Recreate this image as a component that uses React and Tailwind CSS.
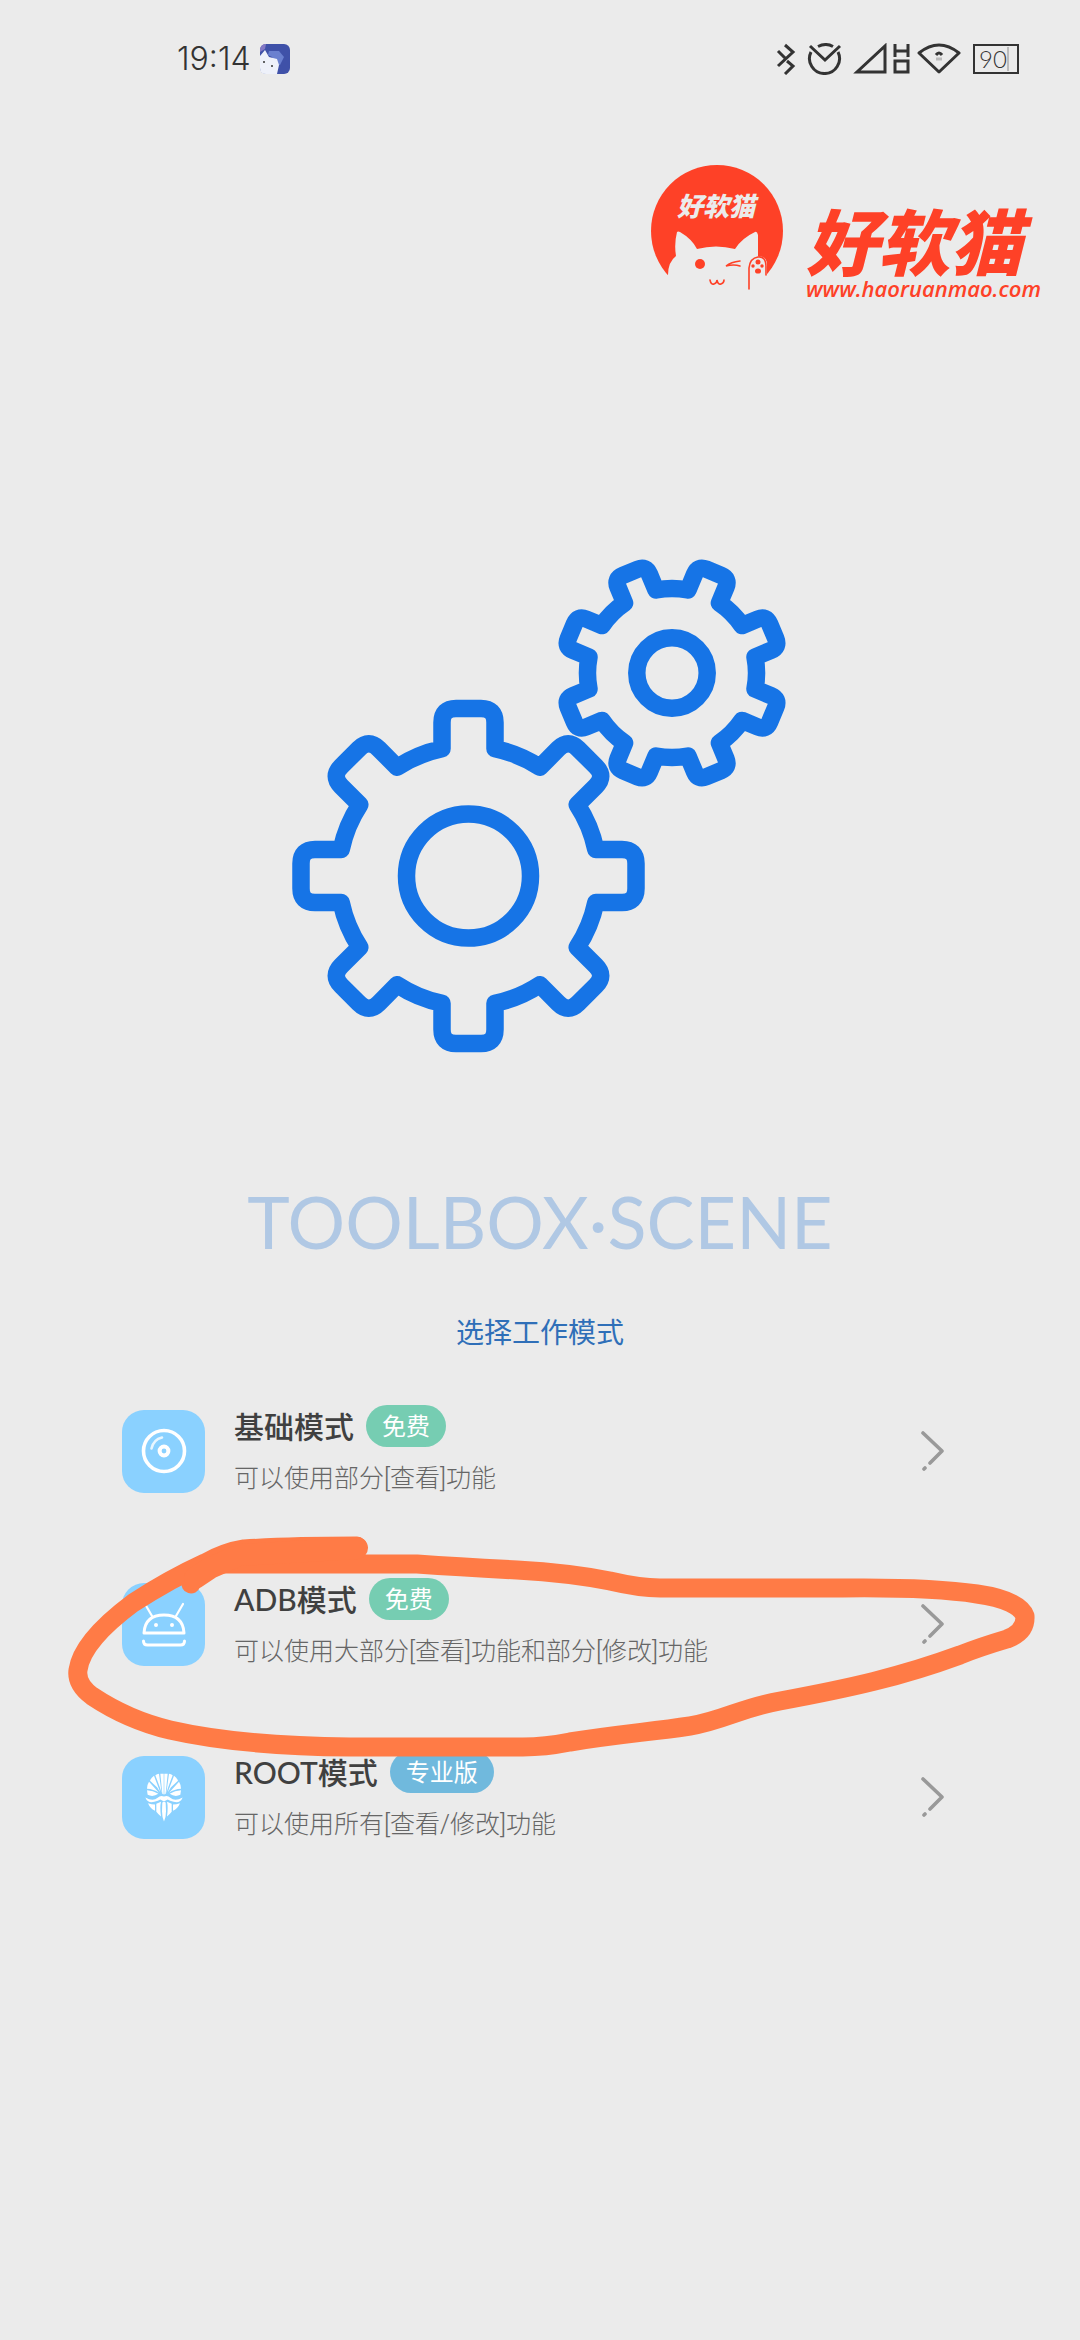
import React from "react";

const rad = (deg) => (deg * Math.PI) / 180;

/* Outline of an eight-toothed gear with rounded tooth corners. */
function gearPath(cx, cy, root, tip, half, corner, offset) {
  const parts = [];
  const baseAngle = Math.asin(half / root);
  const base = root * Math.cos(baseAngle);
  for (let i = 0; i < 8; i++) {
    const a = rad(i * 45 + offset);
    const at = (along, across) =>
      [
        cx + along * Math.cos(a) - across * Math.sin(a),
        cy + along * Math.sin(a) + across * Math.cos(a),
      ]
        .map((n) => n.toFixed(1))
        .join(" ");
    parts.push(
      i === 0 ? `M${at(base, -half)}` : `A${root} ${root} 0 0 1 ${at(base, -half)}`,
      `L${at(tip - corner, -half)}`,
      `Q${at(tip, -half)} ${at(tip, -half + corner)}`,
      `L${at(tip, half - corner)}`,
      `Q${at(tip, half)} ${at(tip - corner, half)}`,
      `L${at(base, half)}`
    );
    if (i === 7) {
      const s = rad(offset);
      const x = cx + base * Math.cos(s) + half * Math.sin(s);
      const y = cy + base * Math.sin(s) - half * Math.cos(s);
      parts.push(`A${root} ${root} 0 0 1 ${x.toFixed(1)} ${y.toFixed(1)}Z`);
    }
  }
  return parts.join("");
}

function Gears() {
  return (
    <svg
      viewBox="0 0 500 500"
      className="h-[500px] w-[500px]"
      fill="none"
      stroke="#1674e6"
      strokeWidth="17.5"
      strokeLinejoin="round"
      aria-hidden="true"
    >
      <path d={gearPath(178.5, 321, 130, 167.5, 26.5, 14, 0)} />
      <circle cx="178.5" cy="321" r="62" />
      <path d={gearPath(382, 118, 84.5, 109, 17, 9, 22.5)} />
      <circle cx="382" cy="118" r="35.2" />
    </svg>
  );
}

function AppBadge() {
  return (
    <svg viewBox="0 0 32 32" className="h-8 w-8" aria-hidden="true">
      <rect x="1" y="1" width="30" height="30" rx="6" fill="#3f51a8" />
      <path d="M10 8h10l5 6-4 8h-3l-5-8-4-2z" fill="#6a80cf" />
      <path d="M1 13l5-6 4 7 8 2 2 6-2 9H7q-6 0-6-6z" fill="#eef1fa" />
      <path d="M1 9V6q1-5 6-5l-1 5z" fill="#8378c4" />
      <circle cx="5" cy="19" r="1" fill="#333" />
      <circle cx="13" cy="23" r="1" fill="#333" />
    </svg>
  );
}

function StatusIcons() {
  return (
    <svg
      viewBox="0 0 186 32"
      className="h-8 w-[186px]"
      fill="none"
      stroke="#333"
      strokeWidth="3"
      aria-hidden="true"
    >
      <path d="M2 8l7 7M9 2l8 7L2 23M11 18l6 5-8 8" />
      <path d="M34 3l15 14L64 3" />
      <path d="M42 3.5q8-4 15 0M35 9a15 15 0 1 0 27 0" />
      <path d="M109 3v26H81z" />
      <path d="M119 1v13M132 1v13M119 8h13M119 18h13v11h-13z" />
      <path d="M143 10q20-16 40 0L163 29z" strokeLinejoin="round" />
      <path d="M160 12q3-4 6 0" />
      <path d="M160 16h6" stroke="#bbb" />
    </svg>
  );
}

function StatusBar() {
  return (
    <header className="flex h-[118px] items-center justify-between pr-[61px] pl-[177px] text-[#333]">
      <div className="flex items-center gap-2">
        <time className="font-[Inter,sans-serif] text-[32px] leading-8 font-light">19:14</time>
        <AppBadge />
      </div>
      <div className="flex items-center gap-[11px]">
        <StatusIcons />
        <div className="flex h-[30px] w-[46px] items-center border-2 border-[#333] pl-1 font-[Lato,sans-serif] text-[24px] leading-6 font-light">
          <span className="border-r-2 border-[#bbb]">90</span>
        </div>
      </div>
    </header>
  );
}

function CatLogo() {
  return (
    <svg viewBox="0 0 134 134" className="h-[134px] w-[134px]" aria-hidden="true">
      <circle cx="67" cy="67" r="66" fill="#fe4127" />
      <path
        d="M0 134V111H18Q18 98 26 92Q24 80 27 68Q28 67 30 68Q42 75 47 85Q66 80 85 85Q92 74 105 68Q107 67 108 71V92Q117 92 117 101V111H134V134Z"
        fill="#ebebeb"
      />
      <circle cx="50" cy="100" r="5" fill="#fe4127" />
      <g fill="none" stroke="#fe4127" strokeWidth="1.6" strokeLinecap="round">
        <path d="M90 97q-9 1-14 5q8-2 14 0" />
        <path d="M60 116q1 5 4 4t3-4q1 5 4 4t3-4" />
        <path d="M99 125V104q1-10 9-11t8 10v8" />
      </g>
      <g fill="#fe4127">
        <circle cx="108" cy="98" r="2.5" />
        <circle cx="103" cy="102" r="1.7" />
        <circle cx="112" cy="102" r="1.7" />
        <ellipse cx="108" cy="107" rx="3" ry="2.6" />
      </g>
      <text
        x="66"
        y="52"
        textAnchor="middle"
        fill="#ebebeb"
        className="font-['Noto_Sans_CJK_SC',sans-serif] text-[26px] font-black italic"
      >
        好软猫
      </text>
    </svg>
  );
}

function Brand() {
  return (
    <div className="flex items-start justify-end gap-[22px] pt-[46px] pr-[39px] text-[#fe4127]">
      <CatLogo />
      <div className="flex flex-col pt-[38px]">
        <span className="font-['Noto_Sans_CJK_SC',sans-serif] text-[72px] leading-[74px] font-black italic">
          好软猫
        </span>
        <a href="#site" className="font-['Open_Sans',sans-serif] text-[22px] leading-6 font-semibold italic">
          www.haoruanmao.com
        </a>
      </div>
    </div>
  );
}

function DiscIcon() {
  return (
    <svg viewBox="0 0 48 48" className="h-12 w-12" fill="none" stroke="#fff" aria-hidden="true">
      <circle cx="24" cy="24" r="20.5" strokeWidth="3.6" />
      <circle cx="24" cy="24" r="4.4" strokeWidth="4" />
      <path d="M11.500 21.500Q13.500 12.500 22 10.500" strokeWidth="2.6" strokeLinecap="round" opacity="0.8" />
    </svg>
  );
}

function AndroidIcon() {
  return (
    <svg
      viewBox="0 0 48 48"
      className="h-12 w-12"
      fill="none"
      stroke="#fff"
      strokeWidth="3"
      strokeLinecap="round"
      strokeLinejoin="round"
      aria-hidden="true"
    >
      <path d="M4 33Q5 15 24 15T44 33Z" />
      <path d="M12 16L5 4M36 16L43 4" strokeWidth="2.2" />
      <path d="M3.500 41q0 4 4 4h33q4 0 4-4" />
      <circle cx="16" cy="25" r="1" strokeWidth="2" />
      <circle cx="32" cy="25" r="1" strokeWidth="2" />
    </svg>
  );
}

function MaskIcon() {
  const half = (
    <>
      <path d="M102 38L92 38L98 98L102 100Z" />
      <path d="M88 38Q82 39 77 42L91 80L96 96Z" />
      <path d="M73 44Q64 50 61 59L82 78L92 94Z" />
      <path d="M58 62Q52 71 52 83Q72 84 88 95Z" />
      <path d="M52 87L54 101Q70 109 86 98Q70 88 52 87Z" />
      <path d="M103 106Q92 101 84 110Q70 122 47 109Q54 127 74 122Q86 119 92 115L103 121Z" />
      <path d="M55 126Q61 141 76 149V130Q66 130 55 126Z" />
      <path d="M80 128L94 122Q90 138 94 166Q86 160 80 152Z" />
      <path d="M98 124L103 122V181Q97 168 97 150Z" />
    </>
  );
  return (
    <svg viewBox="46 36 114 146" className="h-[49px] w-[38px]" fill="#fff" aria-hidden="true">
      <g>{half}</g>
      <g transform="translate(206 0) scale(-1 1)">{half}</g>
    </svg>
  );
}

function Chevron() {
  return (
    <svg
      viewBox="0 0 24 42"
      className="h-[42px] w-6"
      fill="none"
      stroke="#999"
      strokeWidth="3.6"
      strokeLinecap="round"
      strokeLinejoin="round"
      aria-hidden="true"
    >
      <path d="M3 3l19 18-12 12M4 39l1-1" />
    </svg>
  );
}

/* Hand-drawn loop around the highlighted mode. */
function Marker() {
  return (
    <svg
      viewBox="0 0 980 230"
      className="pointer-events-none absolute top-[-50px] left-[-62px] h-[230px] w-[980px] max-w-none"
      fill="none"
      stroke="#ff7b46"
      strokeWidth="19"
      strokeLinecap="round"
      strokeLinejoin="round"
      aria-hidden="true"
    >
      <path d="M297 18Q230 18 184 21Q165 24 145 35Q110 51 73 75Q22 113 18 142Q16 156 32 168Q68 192 110 202Q180 218 290 219H463Q485 219 510 214C560 206 590 204 630 198C665 192 680 180 720 173C790 160 840 149 900 127Q920 119 947 111Q966 104 965 88Q959 72 917 66Q870 59 783 60H600Q580 60 550 53Q510 45 457 42Q400 39 357 36H157Q136 40 131 56" />
      <path d="M297 20L180 27L150 40L135 50" strokeWidth="22" />
    </svg>
  );
}

const modes = [
  { icon: DiscIcon, title: "基础模式", tag: "免费", tone: "bg-[#76cdb2]", text: "可以使用部分[查看]功能" },
  {
    icon: AndroidIcon,
    title: "ADB模式",
    tag: "免费",
    tone: "bg-[#76cdb2]",
    text: "可以使用大部分[查看]功能和部分[修改]功能",
    marked: true,
  },
  { icon: MaskIcon, title: "ROOT模式", tag: "专业版", tone: "bg-[#70b9dd]", text: "可以使用所有[查看/修改]功能" },
];

function ModeRow({ mode }) {
  const Icon = mode.icon;
  return (
    <li className={mode.marked ? "relative z-10" : "relative"}>
      <button type="button" className="flex w-full items-center text-left">
        <span className="flex h-[83px] w-[83px] shrink-0 items-center justify-center rounded-[22px] bg-[#8ad1ff]">
          <Icon />
        </span>
        <span className="ml-[29px] flex grow flex-col gap-[14px]">
          <span className="flex items-center gap-3">
            <span className="text-[30px] leading-[42px] font-medium text-[#404040]">{mode.title}</span>
            <span className={`${mode.tone} rounded-full px-4 text-[24px] leading-[42px] text-white`}>
              {mode.tag}
            </span>
          </span>
          <span className="font-[Roboto,'Noto_Sans_CJK_SC',sans-serif] text-[25px] leading-9 font-light text-[#666]">
            {mode.text}
          </span>
        </span>
        <Chevron />
      </button>
      {mode.marked && <Marker />}
    </li>
  );
}

export default function App() {
  return (
    <div className="min-h-screen overflow-hidden bg-[#ebebeb] font-[Lato,'Noto_Sans_CJK_SC',sans-serif]">
      <StatusBar />
      <Brand />
      <main>
        <div className="flex justify-center pt-[255px]">
          <Gears />
        </div>
        <h1 className="mt-[122px] text-center text-[72px] leading-[88px] text-[#b0c8e4]">TOOLBOX·SCENE</h1>
        <p className="mt-[47px] text-center text-[28px] leading-10 text-[#2f6fb8]">选择工作模式</p>
        <ul className="mt-[53px] flex flex-col gap-[81px] pr-[136px] pl-[122px]">
          {modes.map((mode) => (
            <ModeRow key={mode.title} mode={mode} />
          ))}
        </ul>
      </main>
    </div>
  );
}
